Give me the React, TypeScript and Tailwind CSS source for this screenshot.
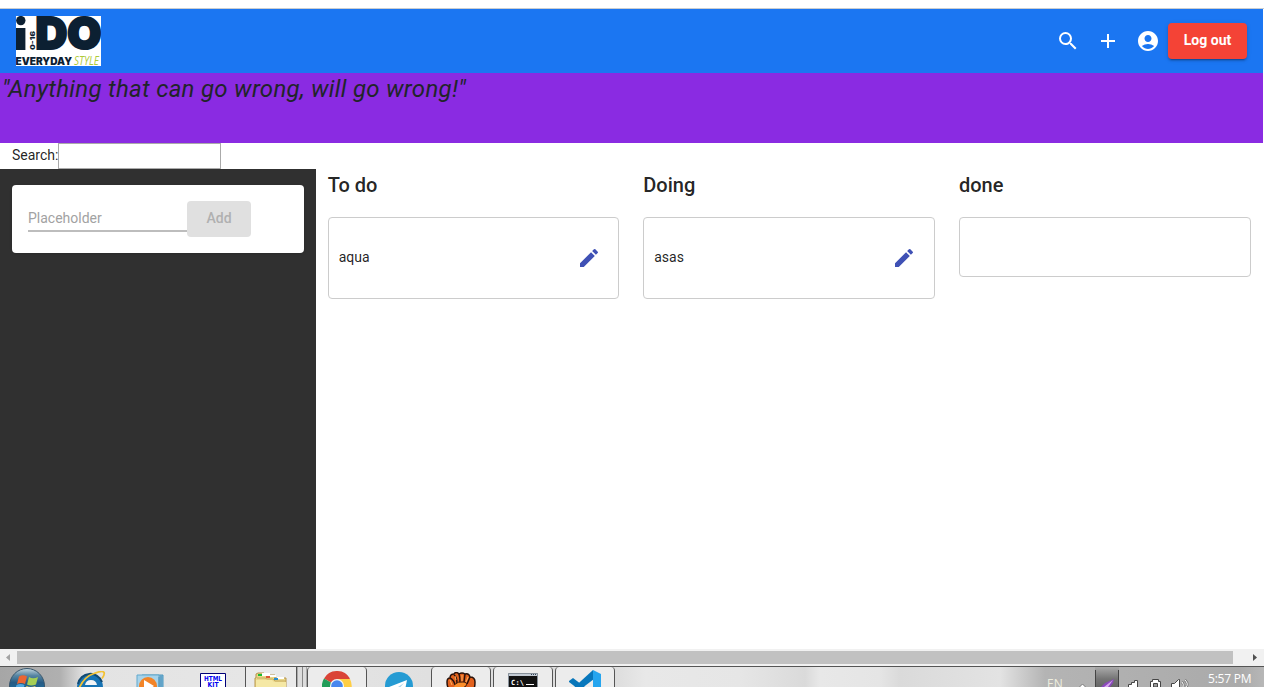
import type { ReactNode } from "react";
import { MdAccountCircle, MdAdd, MdEdit, MdSearch } from "react-icons/md";

function Logo() {
  return (
    <svg width="85" height="50" viewBox="0 0 85 50" className="block bg-white" fill="#0c2032" fontFamily="Inter, 'Open Sans', sans-serif">
      <circle cx="4.8" cy="4.6" r="4.7" />
      <rect x="0" y="12" width="9.4" height="22" />
      <text x="19" y="34" fontSize="6.5" fontWeight="900" textLength="19" lengthAdjust="spacingAndGlyphs" transform="rotate(-90 19 34)">0-16</text>
      <text x="19.5" y="32.8" fontSize="44" fontWeight="900" textLength="66" lengthAdjust="spacingAndGlyphs" stroke="#0c2032" strokeWidth="2.2">DO</text>
      <text x="-0.5" y="48.6" fontSize="10.2" fontWeight="900" textLength="56.5" lengthAdjust="spacingAndGlyphs">EVERYDAY</text>
      <text x="58" y="48.6" fontSize="13" fontFamily="'Open Sans', sans-serif" fontStyle="italic" fontWeight="400" textLength="25" lengthAdjust="spacingAndGlyphs" fill="#afca38">STYLE</text>
    </svg>
  );
}

function Header() {
  return (
    <header className="flex h-16 items-center bg-[#1b76f2] pl-4 pr-4 text-white">
      <Logo />
      <div className="ml-auto flex items-center">
        <button className="flex size-10 items-center justify-center"><MdSearch size={24} /></button>
        <button className="flex size-10 items-center justify-center"><MdAdd size={24} /></button>
        <button className="flex size-10 items-center justify-center"><MdAccountCircle size={24} /></button>
        <button className="h-9 w-[79px] rounded bg-[#f44336] pb-0.5 text-sm font-bold shadow-[0_3px_1px_-2px_rgba(0,0,0,.2),0_2px_2px_0_rgba(0,0,0,.14),0_1px_5px_0_rgba(0,0,0,.12)]">
          Log out
        </button>
      </div>
    </header>
  );
}

function Column({ title, items }: { title: string; items: string[] }) {
  return (
    <section className="px-3">
      <h2 className="mb-4 h-8 text-xl font-medium leading-8 text-black/87">{title}</h2>
      <div className="min-h-[60px] rounded border border-[#ccc] bg-white">
        {items.map((item) => (
          <div key={item} className="flex h-20 items-center justify-between pl-2.5 pr-[17.5px] text-sm text-black/87">
            <span className="pb-0.5">{item}</span>
            <MdEdit size={24} className="text-[#3f51b5]" />
          </div>
        ))}
      </div>
    </section>
  );
}

function Scrollbar() {
  return (
    <div className="flex h-[17px] items-center bg-[#f1f1f1]">
      <svg width="17" height="17" viewBox="0 0 17 17"><path d="M10 5v7L6 8.5z" fill="#a3a3a3" /></svg>
      <div className="h-[13px] flex-1 bg-[#c1c1c1]" />
      <div className="w-[14px]" />
      <svg width="17" height="17" viewBox="0 0 17 17"><path d="M6 5v7l4-3.500z" fill="#505050" /></svg>
    </div>
  );
}

function StartIcon() {
  return (
    <svg width="36" height="36" viewBox="0 0 36 36">
      <defs>
        <linearGradient id="orb" x2="0" y2="1">
          <stop stopColor="#c4d6df" /><stop offset=".2" stopColor="#5886a3" /><stop offset=".4" stopColor="#265b84" /><stop offset="1" stopColor="#1288c4" />
        </linearGradient>
      </defs>
      <circle cx="18" cy="18" r="17.500" fill="url(#orb)" stroke="#38566c" />
      <path d="M10 8.500q4-2.500 8 0l-2 7.500q-4-2-8 0z" fill="#eb6532" />
      <path d="M20 9q4 2.500 9 0l-2 7.500q-5 2-9 0z" fill="#a5cf55" />
      <path d="M7.500 17q4-2 8 0l-2 7q-4-2-8 0z" fill="#50a7de" />
      <path d="M17.500 18q4 2 9 0l-2 7q-5 2-9 0z" fill="#ffd34d" />
    </svg>
  );
}

function ExplorerIcon() {
  return (
    <svg width="32" height="32" viewBox="0 0 32 32">
      <circle cx="15" cy="16" r="13" fill="#1773b4" />
      <path d="M3 13A12.500 12.500 0 0 1 27 11" fill="none" stroke="#124a72" strokeWidth="2" />
      <path d="M10 14q1-5 6-5t6 5z" fill="#f1f4f6" />
      <path d="M3 20Q8 6 19 2.500q9-3.500 10-1 1 2-2 6" fill="none" stroke="#f3c234" strokeWidth="1.800" />
    </svg>
  );
}

function MediaIcon() {
  return (
    <svg width="28" height="28" viewBox="0 0 28 28">
      <path d="M6 1h21v24H6z" fill="#78b5d8" stroke="#4c96bd" />
      <path d="M1 1h22v25H1z" fill="#a7d3ea" stroke="#62a9cd" />
      <path d="M23 3v22M25 2v22" stroke="#4e91b7" />
      <circle cx="12" cy="12" r="9" fill="#f38427" />
      <path d="M8 6l10 6-10 7z" fill="white" />
    </svg>
  );
}

function HtmlKitIcon() {
  return (
    <svg width="26" height="26" viewBox="0 0 26 26">
      <path d="M.5.5h25v25H.5z" fill="white" stroke="#000077" />
      <g fill="#0000f0" fontFamily="'DejaVu Sans', sans-serif" fontWeight="700">
        <text x="4" y="8" fontSize="7" textLength="18" lengthAdjust="spacingAndGlyphs">HTML</text>
        <text x="7.500" y="14" fontSize="7" textLength="11" lengthAdjust="spacingAndGlyphs">KIT</text>
      </g>
    </svg>
  );
}

function FolderIcon() {
  return (
    <svg width="34" height="28" viewBox="0 0 34 28">
      <path d="M2 6V2l2-1h6l2 2h9v3h11v22H1V6z" fill="#ead78a" stroke="#b7964d" />
      <path d="M8 1h8v3H8zM16 3h6v2h-6zM23 5h7v2h-7z" fill="#fff" />
      <path d="M4 2h4v2H4z" fill="#19bd34" /><path d="M12 4h4v2h-4z" fill="#dd5736" /><path d="M20 6h4v2h-4z" fill="#278dd1" />
      <path d="M3 6h8l2 1h6l2 2h11" fill="none" stroke="#c6aa5c" />
      <path d="M2 8h16l2 2h12v18H2z" fill="#f5e8a5" />
    </svg>
  );
}

function ChromeIcon() {
  return (
    <svg width="30" height="30" viewBox="0 0 30 30">
      <path d="M15 15 2 7.500A15 15 0 0 1 28 7.500z" fill="#da4437" />
      <path d="M15 15 2 7.500A15 15 0 0 0 15 30l7-11z" fill="#229d59" />
      <path d="M15 8h13A15 15 0 0 1 15 30l7-11z" fill="#ffce44" />
      <circle cx="15" cy="15" r="7" fill="#f2f5f8" /><circle cx="15" cy="15" r="5.800" fill="#4787ee" />
    </svg>
  );
}

function TelegramIcon() {
  return (
    <svg width="28" height="28" viewBox="0 0 28 28">
      <circle cx="14" cy="14" r="14" fill="#259bd3" />
      <path d="M4 15 22 8l-3 15-6-4-3 3v-5z" fill="#fff" /><path d="m10 17 9-6-7 8-2 3z" fill="#acd4e9" />
    </svg>
  );
}

function FistIcon() {
  return (
    <svg width="30" height="28" viewBox="0 0 30 28">
      <path d="M1 10Q1 6 4 6q0-4 4-4 2-3 5 0 3-2 6 0 4-1 5 3 5 0 5 5 0 9-5 13v5H8v-6Q1 18 1 10z" fill="#e2611d" stroke="#29120b" strokeWidth="1.500" />
      <path d="M8 3q3 2 3 8M13 2q1 3 1 8M19 2l-1 8M24 5l-3 7M4 6q4 2 5 7" fill="none" stroke="#29120b" strokeWidth="1.500" />
      <path d="M8 13q4-4 9-3 5 0 3 4l-5 3-4 7" fill="#fb8d29" stroke="#411b0c" />
      <path d="M4 8l2 5M9 4l1 4M16 3v6M22 5l-2 5" stroke="#ffb15c" />
    </svg>
  );
}

function TerminalIcon() {
  return (
    <svg width="30" height="28" viewBox="0 0 30 28">
      <path d="M.5.5h29v27H.5z" fill="#111" stroke="#87909a" />
      <path d="M1 1h28v2H1z" fill="#c3cbd4" /><path d="M23 1h1v1h-1zM25 1h1v1h-1zM27 1h1v1h-1z" fill="#344456" />
      <text x="3" y="12" fill="white" fontFamily="'DejaVu Sans Mono', monospace" fontSize="7" fontWeight="700" textLength="13">C:\</text>
      <path d="M18 11h8v1h-8z" fill="white" />
    </svg>
  );
}

function CodeIcon() {
  return (
    <svg width="32" height="32" viewBox="0 0 32 32">
      <path d="m0 11 4-3 21 16v7L0 12z" fill="#0876b9" />
      <path d="M24 0 0 22l4 3L25 9z" fill="#0877bc" />
      <path d="m24 0 8 4v24l-8 4z" fill="#25a5ef" />
    </svg>
  );
}

function TrayIcons() {
  return (
    <svg width="118" height="20" viewBox="0 0 118 20" className="block">
      <defs>
        <linearGradient id="tray" x2="0" y2="1">
          <stop stopColor="#aaa" /><stop offset=".6" stopColor="#747474" /><stop offset="1" stopColor="#666" />
        </linearGradient>
      </defs>
      <path d="M1.500 20l3-3 3 3" fill="#fff" stroke="#777" />
      <path d="M17 0h24v20H17z" fill="url(#tray)" />
      <path d="M17.500 3v17M40.500 3v17" stroke="#444" />
      <path d="m23 20 4-4 9-4-1 4-3 4z" fill="#8a4abb" />
      <path d="m26 20 9-7-5 7" fill="#d8a6ee" />
      <g fill="#fff" stroke="#454545">
        <path d="M50.500 20v-2.500h3v-2h3v-2h3V20" />
        <path d="M72.500 20v-5.500h2v-2h6v2h2V20" />
        <path d="M75.500 16.500h4V20h-4z" fill="#999" />
        <path d="M93.500 20v-3.500h3l4-4h1V20" />
      </g>
      <path d="M104 15q2 2 1 5M107 13q4 4 1 7" fill="none" stroke="#777" strokeWidth="2.500" />
      <path d="M104 15q2 2 1 5M107 13q4 4 1 7" fill="none" stroke="#fff" />
    </svg>
  );
}

function Task({ children, className }: { children: ReactNode; className: string }) {
  return <div className={`flex h-[21px] shrink-0 items-start justify-center overflow-hidden ${className}`}>{children}</div>;
}

function Taskbar() {
  return (
    <footer className="flex h-[21px] overflow-hidden border-t border-[#555] bg-[linear-gradient(90deg,#a6a6a6_0px,#b0b0b0_60px,#e3e3e3_85px,#e6e6e6_245px,#ddd_520px,#ddd_615px,#e8e8e8_645px,#e6e6e6_740px,#dadada_805px,#e8e8e8_820px,#e5e5e5_880px,#dadada_900px,#e3e3e3_1000px,#b4b4b4_1045px,#aaa_1240px,#b7b7b7_1264px)]">
      <Task className="w-[62px] justify-start pl-[9px] pt-[1px]"><StartIcon /></Task>
      <Task className="w-[58px] pt-[4px]"><ExplorerIcon /></Task>
      <Task className="w-[60px] pt-[7px]"><MediaIcon /></Task>
      <Task className="w-[65px] pl-px pt-[6px]"><HtmlKitIcon /></Task>
      <Task className="w-[52px] border-x border-[#555] bg-[#eaeaea] pt-[5px]"><FolderIcon /></Task>
      <div className="flex h-5 w-[10px] justify-center border-x border-[#aaa] bg-[#ddd]"><div className="w-px bg-[#888]" /></div>
      <Task className="w-[60px] rounded-t-sm border-x border-[#555] bg-[#ececec] pt-[4px]"><ChromeIcon /></Task>
      <Task className="w-[64px] pt-[5px]"><TelegramIcon /></Task>
      <Task className="w-[60px] rounded-t-sm border-x border-[#555] bg-[#ececec] pt-[5px]"><FistIcon /></Task>
      <Task className="ml-[2px] w-[60px] rounded-t-sm border-x border-[#555] bg-[#ececec] pt-[6px]"><TerminalIcon /></Task>
      <Task className="ml-[2px] w-[60px] rounded-t-sm border-x border-[#555] bg-[#ececec] pt-[3px]"><CodeIcon /></Task>
      <div className="ml-auto flex h-5 text-white">
        <span className="w-[31px] pt-[8px] font-['Open_Sans',sans-serif] text-xs leading-[17px] text-[#eeeedf]">EN</span>
        <TrayIcons />
        <span className="ml-[12px] w-[56px] whitespace-nowrap pt-[3px] font-['Open_Sans',sans-serif] text-xs leading-[17px] tracking-[-0.2px]">5:57 PM</span>
      </div>
    </footer>
  );
}

export default function App() {
  return (
    <div className="flex h-[687px] w-[1264px] flex-col overflow-hidden bg-white font-['Roboto',sans-serif] text-black/87">
      <div className="h-[9px] shrink-0 border-b border-[#c9cdd1]" />
      <main className="mr-px flex h-[640px] shrink-0 flex-col">
        <Header />
        <div className="h-[70px] bg-[#8a2be2] pl-[2px]">
          <p className="text-2xl italic leading-8 tracking-[0.3px] text-[#212529]">"Anything that can go wrong, will go wrong!"</p>
        </div>
        <div className="flex h-[26px] pl-3 text-sm">
          <label htmlFor="search" className="w-[46px] leading-6">Search:</label>
          <input id="search" className="h-[26px] w-[163px] border border-[#aaa] px-1 outline-none" />
        </div>
        <div className="mr-[0.5px] grid flex-1 grid-cols-4">
          <aside className="bg-[#303030] px-3 pt-4">
            <form className="flex h-[68px] items-start rounded bg-white pl-4 pt-4 shadow-sm">
              <input placeholder="Placeholder" className="h-[31px] w-[159px] border-b-2 border-[#bdbdbd] pt-[5px] text-sm outline-none placeholder:text-[#a2a2a2]" />
              <button disabled className="h-9 w-16 rounded bg-[#e0e0e0] pb-0.5 text-sm font-medium text-[#b0b0b0]">Add</button>
            </form>
          </aside>
          <Column title="To do" items={["aqua"]} />
          <Column title="Doing" items={["asas"]} />
          <Column title="done" items={[]} />
        </div>
      </main>
      <Scrollbar />
      <Taskbar />
    </div>
  );
}
